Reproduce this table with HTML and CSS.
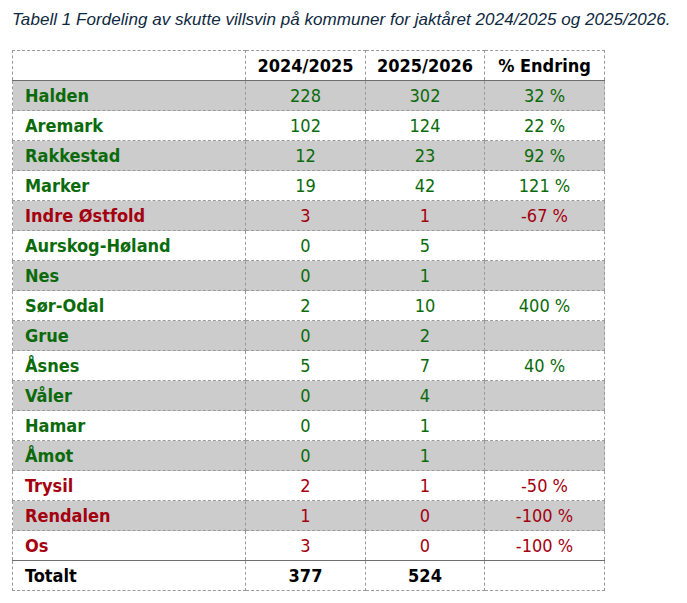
FILE: index.html
```html
<!DOCTYPE html>
<html lang="no">
<head>
<meta charset="utf-8">
<title>Tabell 1</title>
<link rel="stylesheet" href="styles.css">
</head>
<body>
<p class="caption">Tabell 1 Fordeling av skutte villsvin på kommuner for jaktåret 2024/2025 og 2025/2026.</p>
<table class="tbl">
  <colgroup>
    <col class="c-name"><col class="c-num"><col class="c-num2"><col class="c-num">
  </colgroup>
  <thead>
    <tr><th></th><th>2024/2025</th><th>2025/2026</th><th>% Endring</th></tr>
  </thead>
  <tbody>
    <tr class="alt up"><td>Halden</td><td>228</td><td>302</td><td>32 %</td></tr>
    <tr class="up"><td>Aremark</td><td>102</td><td>124</td><td>22 %</td></tr>
    <tr class="alt up"><td>Rakkestad</td><td>12</td><td>23</td><td>92 %</td></tr>
    <tr class="up"><td>Marker</td><td>19</td><td>42</td><td>121 %</td></tr>
    <tr class="alt down"><td>Indre Østfold</td><td>3</td><td>1</td><td>-67 %</td></tr>
    <tr class="up"><td>Aurskog-Høland</td><td>0</td><td>5</td><td></td></tr>
    <tr class="alt up"><td>Nes</td><td>0</td><td>1</td><td></td></tr>
    <tr class="up"><td>Sør-Odal</td><td>2</td><td>10</td><td>400 %</td></tr>
    <tr class="alt up"><td>Grue</td><td>0</td><td>2</td><td></td></tr>
    <tr class="up"><td>Åsnes</td><td>5</td><td>7</td><td>40 %</td></tr>
    <tr class="alt up"><td>Våler</td><td>0</td><td>4</td><td></td></tr>
    <tr class="up"><td>Hamar</td><td>0</td><td>1</td><td></td></tr>
    <tr class="alt up"><td>Åmot</td><td>0</td><td>1</td><td></td></tr>
    <tr class="down"><td>Trysil</td><td>2</td><td>1</td><td>-50 %</td></tr>
    <tr class="alt down"><td>Rendalen</td><td>1</td><td>0</td><td>-100 %</td></tr>
    <tr class="down"><td>Os</td><td>3</td><td>0</td><td>-100 %</td></tr>
  </tbody>
  <tfoot>
    <tr><td>Totalt</td><td>377</td><td>524</td><td></td></tr>
  </tfoot>
</table>
</body>
</html>
```
FILE: styles.css
```css
html, body {
  margin: 0;
  padding: 0;
  background: #ffffff;
}
body {
  padding: 9px 0 0 12px;
}
.caption {
  margin: 0 0 20px 0;
  height: 21px;
  font-family: "Liberation Sans", Arial, sans-serif;
  font-style: italic;
  font-size: 17px;
  line-height: 21px;
  color: #0e2841;
  letter-spacing: 0.05px;
  white-space: nowrap;
}
.tbl {
  border-collapse: collapse;
  table-layout: fixed;
  width: 593px;
  font-family: "Liberation Sans Narrow", "DejaVu Sans Condensed", "Liberation Sans", sans-serif;
  font-size: 18px;
}
.c-name { width: 233px; }
.c-num { width: 120px; }
.c-num2 { width: 119px; }
.tbl th, .tbl td {
  height: 29px;
  padding: 0;
  border: 1px dashed #9a9a9a;
  text-align: center;
  vertical-align: middle;
  line-height: 29px;
}
.tbl th {
  font-weight: bold;
  color: #000;
}
.tbl thead tr th {
  border-bottom: 1px solid #6e6e6e;
}
.tbl tfoot td {
  border-top: 1px solid #6e6e6e;
  font-weight: bold;
  color: #000;
}
.tbl td:first-child {
  text-align: left;
  padding-left: 12px;
  font-weight: bold;
}
.tbl tr.alt td {
  background: #cccccc;
}
.tbl tr.up td {
  color: #0b6b0b;
}
.tbl tr.down td {
  color: #a50010;
}
```
